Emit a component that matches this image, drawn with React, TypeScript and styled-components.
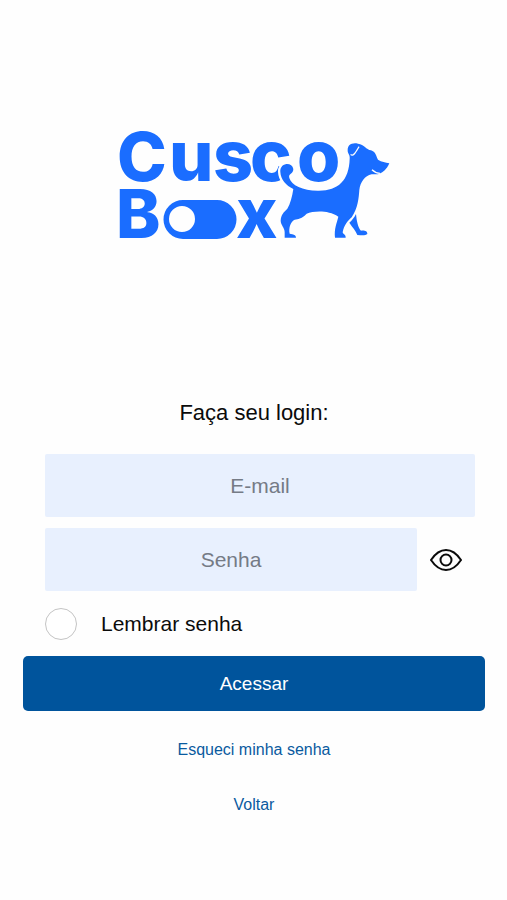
import React, { useState } from "react";
import styled, { createGlobalStyle } from "styled-components";

const GlobalStyle = createGlobalStyle`
  *, *::before, *::after { box-sizing: border-box; }
  body {
    margin: 0;
    background: #fefefe;
    color: #0b0b0b;
    font-family: "Liberation Sans", Arial, Helvetica, sans-serif;
  }
`;

const Page = styled.main`
  display: flex;
  flex-direction: column;
  align-items: center;
  padding: 131px 22px 80px 23px;
`;

const Logo = styled.svg`
  display: block;
  width: 272px;
  height: 108px;
  overflow: visible;
  fill: #1a6dff;
  font-family: Inter, sans-serif;
  font-weight: 800;
`;

const Capital = styled.text`
  font-size: 67px;
`;

const Lowercase = styled.text`
  font-size: 70px;
`;

const Form = styled.form`
  display: flex;
  flex-direction: column;
  width: 100%;
  margin-top: 160px;
`;

const Title = styled.h1`
  margin: 0 0 28px;
  font-size: 22px;
  font-weight: 400;
  line-height: 27px;
  text-align: center;
`;

const Fields = styled.div`
  display: flex;
  flex-direction: column;
  gap: 11px;
  padding: 0 10px 0 22px;
`;

const PasswordRow = styled.div`
  display: flex;
  align-items: center;
`;

const Field = styled.input`
  flex: 1;
  width: 100%;
  min-width: 0;
  min-height: 63px;
  padding: 0 16px;
  border: 0;
  border-radius: 2px;
  background: #e8f0fe;
  color: #0b0b0b;
  font: inherit;
  font-size: 21px;
  text-align: center;
  &::placeholder { color: #757b86; opacity: 1; }
`;

const EyeButton = styled.button`
  display: flex;
  align-items: center;
  justify-content: center;
  width: 58px;
  height: 48px;
  padding: 0;
  border: 0;
  background: none;
  color: #0b0b0b;
  cursor: pointer;
`;

const Remember = styled.label`
  display: flex;
  align-items: center;
  gap: 24px;
  margin: 17px 0 16px 22px;
  font-size: 21px;
  line-height: 32px;
`;

const Check = styled.input`
  appearance: none;
  width: 32px;
  height: 32px;
  margin: 0;
  border: 1px solid #c4c4c4;
  border-radius: 50%;
  background: #fff;
  &:checked { background: #00549c; box-shadow: inset 0 0 0 6px #fff; }
`;

const Submit = styled.button`
  height: 55px;
  border: 0;
  border-radius: 5px;
  background: #00549c;
  color: #fff;
  font: inherit;
  font-size: 19px;
  cursor: pointer;
`;

const Links = styled.nav`
  display: flex;
  flex-direction: column;
  align-items: center;
  gap: 35px;
  margin-top: 29px;
`;

const TextLink = styled.a`
  color: #0a5a9f;
  font-size: 16px;
  line-height: 20px;
  text-decoration: none;
`;

function CuscoBoxLogo() {
  return (
    <Logo viewBox="0 0 272 108" role="img" aria-label="Cusco Box">
      <Capital y="50" x="-1">C</Capital>
      <Lowercase y="50" x="51 95 132 179">usco</Lowercase>
      <Capital y="107" x="-2">B</Capital>
      <Lowercase y="107" x="118">x</Lowercase>
      <path
        fillRule="evenodd"
        d="M65 69H99A19.500 19.500 0 0 1 99 108H65A19.500 19.500 0 0 1 65 69ZM64 75A13 13 0 1 0 64 101A13 13 0 1 0 64 75Z"
      />
      <g transform="translate(132 -11) scale(0.333333)">
        <path
          d="M130 147C128 136 119 131 109 132C96 134 90 145 91 156C92 178 108 197 130 207C126 232 121 251 112 266C102 276 93 283 92 302C92 315 104 323 104 337V353H138C138 344 130 343 119 341C115 322 123 304 134 299C151 297 161 291 170 281C190 273 234 269 265 290C260 310 252 327 255 353H287C288 344 279 343 278 337C282 315 294 302 305 292C324 264 326 235 328 210C331 186 344 168 365 163C375 163 381 163 389 161C397 158 410 149 418 130C406 126 395 127 384 119C378 108 377 95 363 91C348 88 343 74 324 71C304 67 293 76 293 90C292 101 301 103 299 117C297 181 265 212 207 212C160 213 124 196 118 174C114 159 130 164 130 147Z"
          stroke="#fefefe"
          strokeWidth="14"
          paintOrder="stroke"
        />
        <path d="M318 282C320 303 324 323 333 332C342 330 353 333 352 342C347 347 336 346 322 345C317 331 308 323 298 308C307 300 313 292 318 282Z" />
        <path
          d="M302 103C309 112 319 94 327 80M366 149Q376 159 390 160"
          fill="none"
          stroke="#fefefe"
          strokeWidth="4"
        />
      </g>
    </Logo>
  );
}

function EyeIcon() {
  return (
    <svg width="32" height="22" viewBox="0 0 32 22" fill="none" stroke="currentColor" strokeWidth="2" aria-hidden="true">
      <path d="M1 11C5 5 10 1 16 1S27 5 31 11C27 17 22 21 16 21S5 17 1 11Z" strokeLinejoin="round" />
      <circle cx="16" cy="11" r="5.500" />
    </svg>
  );
}

export default function App() {
  const [visible, setVisible] = useState(false);
  return (
    <>
      <GlobalStyle />
      <Page>
        <CuscoBoxLogo />
        <Form onSubmit={(event) => event.preventDefault()}>
          <Title>Faça seu login:</Title>
          <Fields>
            <Field type="email" placeholder="E-mail" aria-label="E-mail" />
            <PasswordRow>
              <Field type={visible ? "text" : "password"} placeholder="Senha" aria-label="Senha" />
              <EyeButton type="button" aria-label="Mostrar senha" aria-pressed={visible} onClick={() => setVisible(!visible)}>
                <EyeIcon />
              </EyeButton>
            </PasswordRow>
          </Fields>
          <Remember>
            <Check type="checkbox" />
            Lembrar senha
          </Remember>
          <Submit type="submit">Acessar</Submit>
        </Form>
        <Links>
          <TextLink href="#recuperar">Esqueci minha senha</TextLink>
          <TextLink href="#voltar">Voltar</TextLink>
        </Links>
      </Page>
    </>
  );
}
